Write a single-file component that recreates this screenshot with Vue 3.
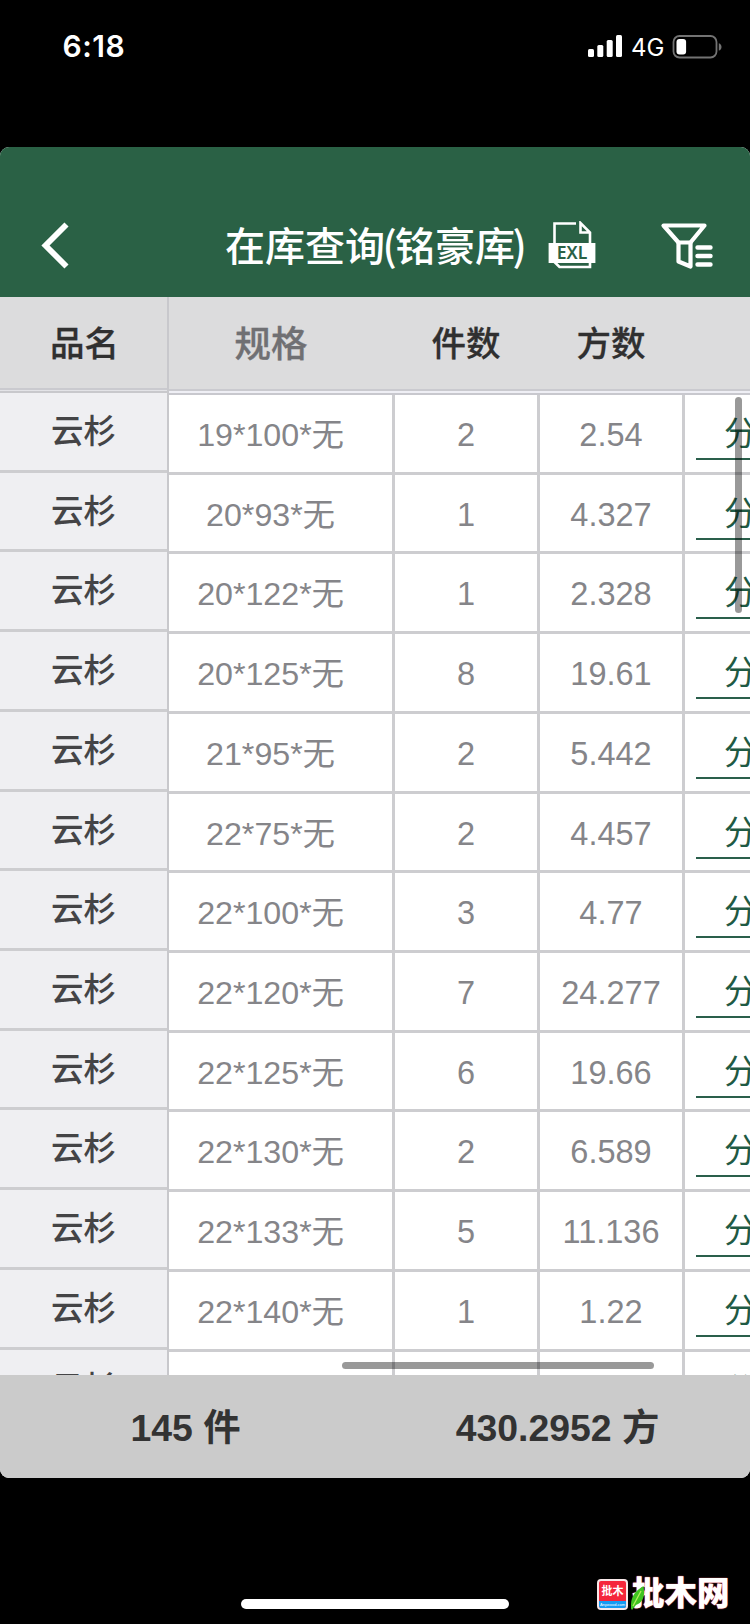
<template>
  <div class="phone">
    <div class="status-bar">
      <span class="time">6:18</span>
      <svg class="signal" width="34" height="22" viewBox="0 0 34 22" fill="#fff">
        <rect x="0" y="14" width="6" height="8" rx="1.5" />
        <rect x="9.3" y="10" width="6" height="12" rx="1.5" />
        <rect x="18.7" y="5" width="6" height="17" rx="1.5" />
        <rect x="28" y="0" width="6" height="22" rx="1.5" />
      </svg>
      <span class="network">4G</span>
      <svg class="battery" width="50" height="24" viewBox="0 0 50 24">
        <rect x="1.5" y="1" width="43" height="21.5" rx="6" fill="none" stroke="#737373" stroke-width="1.8" />
        <rect x="4.5" y="4" width="9.6" height="15.5" rx="3" fill="#fff" />
        <path d="M46.8 8.2c3.6 1 3.6 6.4 0 7.4z" fill="#737373" />
      </svg>
    </div>

    <div class="panel">
      <header class="nav">
        <svg class="back" width="30" height="50" viewBox="0 0 30 50">
          <path d="M26.5 4.5 L5.5 25.5 L26.5 46.5" fill="none" stroke="#fff" stroke-width="5.8" />
        </svg>
        <h1 class="title">在库查询<i>(</i>铭豪库<i>)</i></h1>
        <svg class="excel" width="48" height="48" viewBox="0 0 48 48">
          <path d="M28 2.5H6.5V41M6.5 41L11.5 46H42V11.5L32.5 2V11.5H42" fill="none" stroke="#fff" stroke-width="2.6" />
          <rect x="0.6" y="22" width="46.8" height="20" fill="#fff" />
          <text x="24" y="38.4" text-anchor="middle">EXL</text>
        </svg>
        <svg class="filter" width="54" height="48" viewBox="0 0 54 48" fill="none" stroke="#fff" stroke-linejoin="round" stroke-linecap="round">
          <path d="M3.5 4.5H44.5L30.5 21.5H18.5Z" stroke-width="4.2" />
          <path d="M18.5 21.5V40.5L30.5 45.5V21.5" stroke-width="4.2" />
          <path d="M37.5 26.5H50.5M37.5 35H50.5M37.5 43.5H50.5" stroke-width="4.4" />
        </svg>
      </header>

      <div class="table">
        <div class="frozen">
          <div class="head">品名</div>
          <div v-for="(row, i) in rows" :key="i" class="name">云杉</div>
        </div>
        <div class="scroll">
          <div class="head head-row">
            <span class="sorted">规格</span>
            <span>件数</span>
            <span>方数</span>
          </div>
          <div v-for="(row, i) in rows" :key="i" class="row">
            <span>{{ row[0] }}</span>
            <span>{{ row[1] }}</span>
            <span>{{ row[2] }}</span>
            <span class="action"><a>分</a></span>
          </div>
        </div>
        <div class="bar-v"></div>
        <div class="bar-h"></div>
      </div>

      <footer class="totals">
        <span>145 件</span>
        <span>430.2952 方</span>
      </footer>
    </div>

    <div class="home-bar"></div>

    <div class="watermark">
      <div class="logo">
        <b>批木</b>
        <small>Anywood.com</small>
      </div>
      <span class="brand">批木网</span>
      <svg class="leaf" width="14" height="24" viewBox="0 0 14 24">
        <path d="M12.5 0C14 9 13 16 5 19L1 24L0 22.5C-0.5 13 2 6 12.5 0Z" fill="#3fc321" />
        <path d="M10 5L2 20" stroke="#b4ef5c" stroke-width="1.3" />
      </svg>
    </div>
  </div>
</template>

<script setup>
const rows = [
  ['19*100*无', '2', '2.54'],
  ['20*93*无', '1', '4.327'],
  ['20*122*无', '1', '2.328'],
  ['20*125*无', '8', '19.61'],
  ['21*95*无', '2', '5.442'],
  ['22*75*无', '2', '4.457'],
  ['22*100*无', '3', '4.77'],
  ['22*120*无', '7', '24.277'],
  ['22*125*无', '6', '19.66'],
  ['22*130*无', '2', '6.589'],
  ['22*133*无', '5', '11.136'],
  ['22*140*无', '1', '1.22'],
  ['', '', '']
];
</script>

<style>
body { background: #000; }
</style>

<style scoped>
.phone {
  position: relative; width: 750px; height: 1624px; overflow: hidden; background: #000;
  font-family: "Liberation Sans", "Noto Sans CJK SC", sans-serif;
}
.status-bar {
  height: 147px; box-sizing: border-box; padding: 35px 28px 0 62.5px;
  display: flex; align-items: flex-start; color: #fff; font-family: Inter, sans-serif;
}
.time { font-size: 30px; font-weight: 600; line-height: 23px; letter-spacing: 0.5px; margin-right: auto; }
.network { font-size: 24px; line-height: 25px; width: 31px; margin: 0 10px 0 9px; }

.panel { height: 1331px; border-radius: 9px; overflow: hidden; background: #fff; display: flex; flex-direction: column; }
.nav {
  height: 150px; box-sizing: border-box; background: #2a6145; color: #fff;
  display: flex; align-items: flex-start; padding: 73px 36px 0 40px;
}
.title { margin: -1px 0 0 155px; width: 301px; font-size: 40px; font-weight: 500; line-height: 50px; white-space: nowrap; font-family: "Noto Sans CJK SC", sans-serif; }
.title i { font-style: normal; margin: 0 -1.8px 0 -2.5px; }
.excel { margin: 1px 0 0 22px; }
.excel text { font: 600 17.5px "Noto Sans", sans-serif; fill: #2a6145; }
.filter { margin: 1px 0 0 auto; }

.table { position: relative; height: 1078px; overflow: hidden; display: flex; }
.frozen { width: 167px; flex: none; border-right: 2px solid #c8c8cc; background: #efeff2; }
.scroll { width: 581px; overflow: hidden; }
.head {
  height: 93px; box-sizing: border-box; background: #dcdcdd; border-bottom: 2px solid #cacacf;
  color: #303030; font-size: 34.5px; font-weight: 500; line-height: 95px; text-align: center;
  -webkit-text-stroke: 0.3px currentColor;
  box-shadow: 0 1px 0 #e3e3e7, 0 3px 0 #c8c8cc; margin-bottom: 3px;
}
.frozen .head { padding-left: 2px; }
.head-row {
  display: grid; grid-template-columns: 204px 186px 104px 1fr; height: 94px;
  box-shadow: 0 2px 0 #efeff5, 0 4px 0 #c8c8ce; margin-bottom: 4px;
}
.sorted { font-size: 36.5px; color: #707073; }
.name {
  height: 79.73px; box-sizing: border-box; border-bottom: 3px solid #cdcdd0;
  font-size: 32.5px; font-weight: 500; line-height: 79px; text-align: center; color: #444446;
}
.row {
  height: 79.73px; box-sizing: border-box; border-bottom: 3px solid #cdcdd0;
  display: grid; grid-template-columns: 226px 145px 145px 1fr;
  font-size: 32.5px; line-height: 80px; text-align: center; color: #858589;
}
.row > span { border-right: 3px solid #cdcdd0; white-space: nowrap; }
.row > span:first-child { padding-right: 20px; font-size: 32.2px; }
.row > .action { border: 0; padding-left: 11px; text-align: left; }
.action a { display: block; height: 63px; border-bottom: 2px solid #2a5f4b; padding-left: 28px; line-height: 79px; color: #1f5a44; }

.bar-v { position: absolute; left: 735px; top: 100px; width: 7px; height: 216px; border-radius: 4px; background: rgba(0,0,0,0.4); }
.bar-h { position: absolute; left: 342px; top: 1065px; width: 312px; height: 7px; border-radius: 4px; background: rgba(0,0,0,0.4); }

.totals {
  height: 103px; background: #cbcbcb; display: grid; grid-template-columns: 371px 1fr;
  text-align: center; font-size: 37.4px; font-weight: 600; line-height: 107px; color: #333;
}
.totals span:last-child { padding-right: 6px; }

.home-bar { width: 268px; height: 10px; margin: 121px auto 0; border-radius: 5px; background: #fff; }

.watermark { position: absolute; left: 597px; top: 1579px; display: flex; align-items: center; }
.logo {
  width: 27px; height: 27px; border: 2px solid #f7e8e9; border-radius: 4px; overflow: hidden;
  background: #f5273b; color: #fff; text-align: center; display: flex; flex-direction: column;
}
.logo b { font-size: 11px; line-height: 20px; height: 20px; }
.logo small { font-size: 4px; line-height: 7px; height: 7px; background: #159af3; }
.brand { margin-left: 4px; font-size: 32.5px; font-weight: 900; line-height: 31px; color: #fff; white-space: nowrap; text-shadow: 0 0 1px #f0646f, 0 0 1px #f0646f; }
.leaf { position: absolute; left: 34px; top: 7px; }
</style>
